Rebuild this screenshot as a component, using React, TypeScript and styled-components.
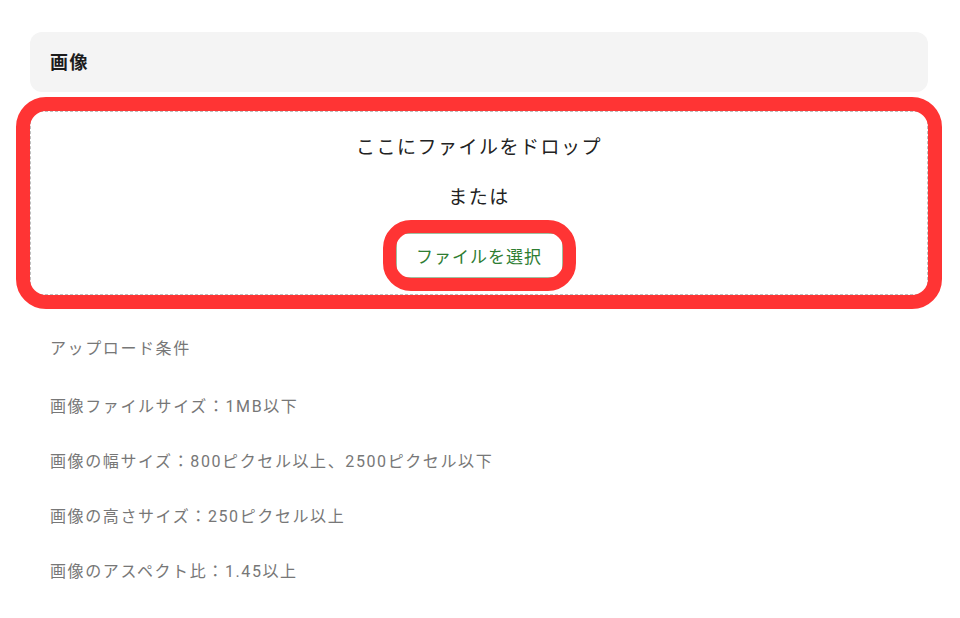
import styled, { createGlobalStyle } from "styled-components";

const GlobalStyle = createGlobalStyle`
  body {
    margin: 0;
    background: #fff;
    font-family: Roboto, "Noto Sans CJK JP", sans-serif;
  }
`;

const Page = styled.div`
  padding: 32px 32px 0 30px;
`;

const SectionHeader = styled.div`
  height: 60px;
  background: #f4f4f4;
  border-radius: 12px;
  display: flex;
  align-items: center;
  padding-left: 20px;
  font-size: 18px;
  font-weight: 700;
  letter-spacing: 1.5px;
  color: #1c1c1c;
  padding-bottom: 2px;
  box-sizing: border-box;
`;

const Marked = styled.div<{ $radius: number; $inset: number }>`
  position: relative;
  &::after {
    content: "";
    position: absolute;
    inset: -${(p) => p.$inset}px;
    border: ${(p) => p.$inset}px solid #ff3434;
    border-radius: ${(p) => p.$radius}px;
    pointer-events: none;
  }
`;

const DropWrap = styled(Marked)`
  margin-top: 19px;
`;

const DropZone = styled.div`
  height: 184px;
  border: 1px dashed #bdbdbd;
  display: flex;
  flex-direction: column;
  align-items: center;
  padding-top: 23px;
  box-sizing: border-box;
  color: #222;
  font-size: 19px;
  letter-spacing: 1.5px;
`;

const DropText = styled.div`
  line-height: 26px;
`;

const OrText = styled.div`
  line-height: 26px;
  margin-top: 24px;
`;

const ButtonWrap = styled(Marked)`
  margin-top: 22px;
`;

const SelectButton = styled.button`
  width: 167px;
  height: 45px;
  background: #fff;
  border: 1px solid #9fbf9f;
  border-radius: 3px;
  color: #2e7d32;
  font-family: Roboto, "Noto Sans CJK JP", sans-serif;
  font-size: 17px;
  letter-spacing: 1px;
  cursor: pointer;
`;

const Conditions = styled.div`
  padding: 42px 0 0 20px;
  display: flex;
  flex-direction: column;
  gap: 31px;
  color: #777;
  font-size: 16px;
  letter-spacing: 1.6px;
`;

const ConditionLine = styled.div<{ $lead?: boolean }>`
  line-height: 24px;
  margin-bottom: ${(p) => (p.$lead ? 3 : 0)}px;
`;

const conditions = [
  "アップロード条件",
  "画像ファイルサイズ：1MB以下",
  "画像の幅サイズ：800ピクセル以上、2500ピクセル以下",
  "画像の高さサイズ：250ピクセル以上",
  "画像のアスペクト比：1.45以上",
];

function App() {
  return (
    <Page>
      <GlobalStyle />
      <SectionHeader>画像</SectionHeader>
      <DropWrap $radius={30} $inset={14}>
        <DropZone>
          <DropText>ここにファイルをドロップ</DropText>
          <OrText>または</OrText>
          <ButtonWrap $radius={28} $inset={13}>
            <SelectButton>ファイルを選択</SelectButton>
          </ButtonWrap>
        </DropZone>
      </DropWrap>
      <Conditions>
        {conditions.map((c, i) => (
          <ConditionLine key={c} $lead={i === 0}>
            {c}
          </ConditionLine>
        ))}
      </Conditions>
    </Page>
  );
}

export default App;
